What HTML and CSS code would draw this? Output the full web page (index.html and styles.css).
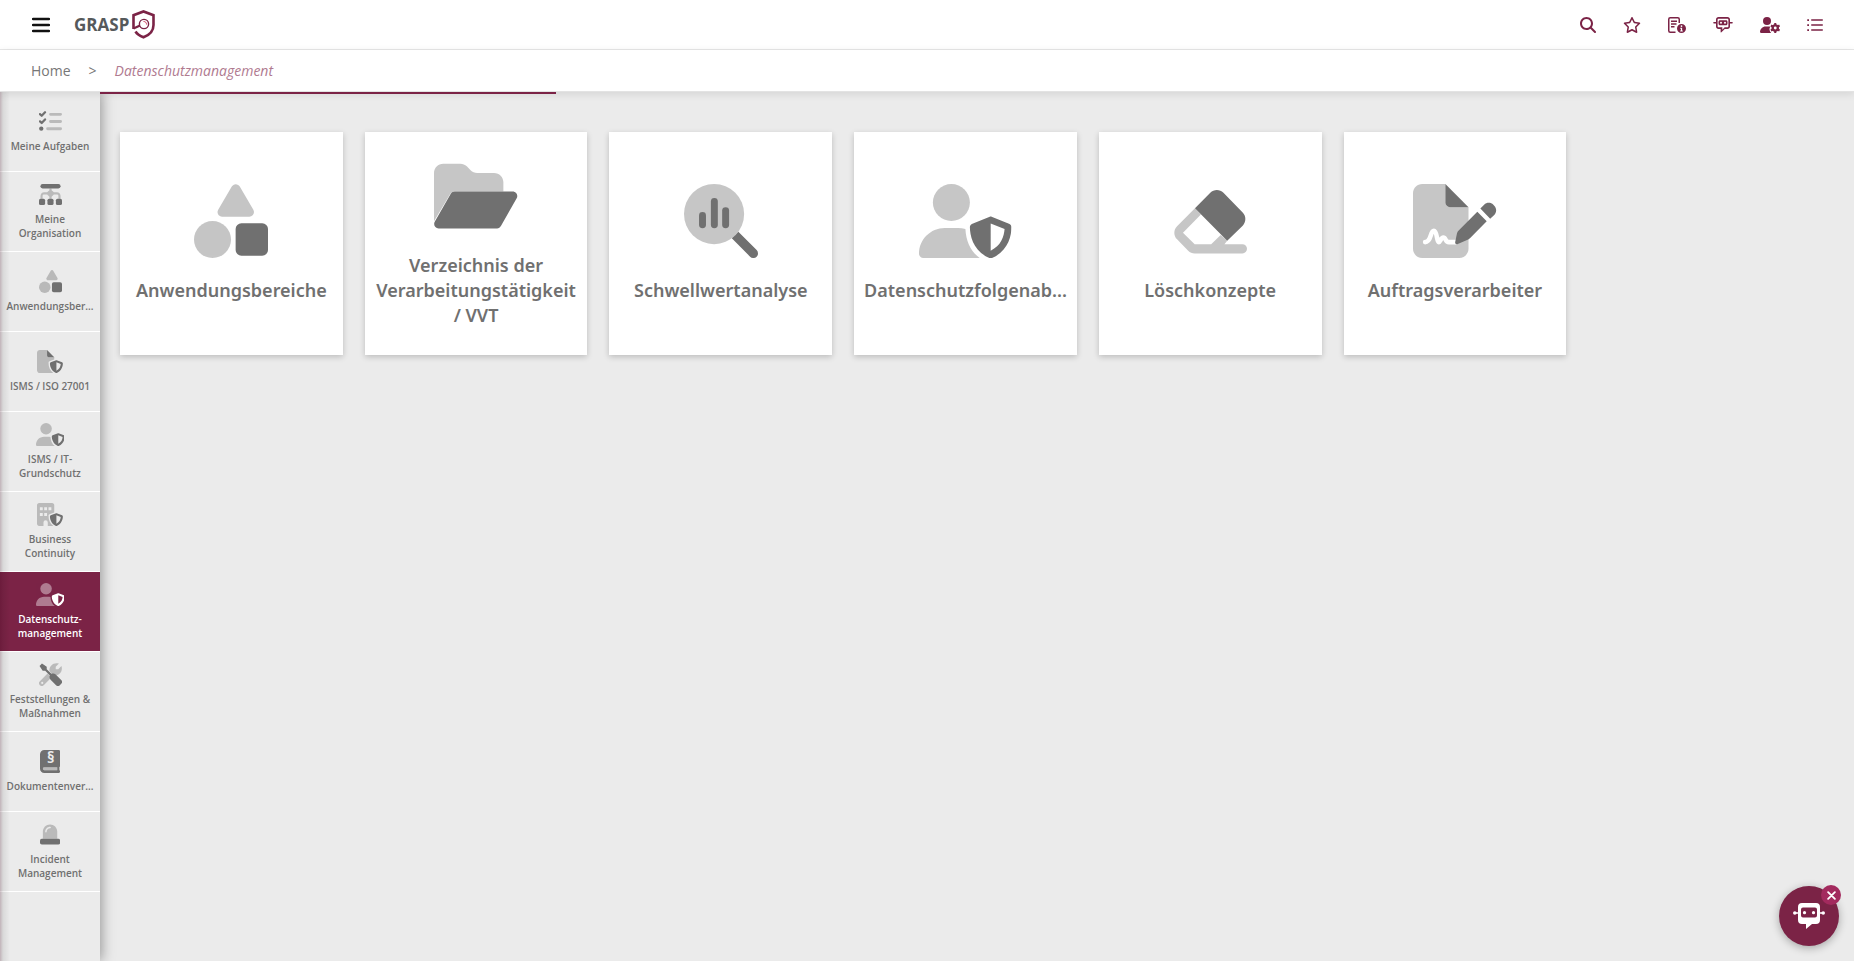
FILE: index.html
```html
<!DOCTYPE html>
<html lang="de">
<head>
    <meta charset="UTF-8">
    <meta name="viewport" content="width=device-width, initial-scale=1.0">
    <title>GRASP - Datenschutzmanagement</title>
    <link rel="stylesheet" href="styles.css">
</head>
<body>
    <!-- shared icon shapes -->
    <svg class="sprite" aria-hidden="true">
        <symbol id="shapes" viewBox="0 0 512 512">
            <g class="light">
                <path d="M289 34L195 194h188z" stroke="currentColor" stroke-width="64" stroke-linejoin="round"/>
                <circle cx="128" cy="384" r="128"/>
            </g>
            <rect x="288" y="272" width="224" height="224" rx="40"/>
        </symbol>
        <symbol id="user-shield" viewBox="0 0 640 512">
            <g class="light">
                <circle cx="224" cy="128" r="128"/>
                <path d="M178.3 304h91.4c18 0 35 2 51.300 7C326 400 360 470 420 512H29.700C13.300 512 0 498.700 0 482.300C0 383.800 79.800 304 178.300 304z"/>
            </g>
            <path fill-rule="evenodd" d="M489.600 226.700c4.100-1.600 8.700-1.600 12.800 0l120 48C631.500 278.300 640 286 640 297.600c0 63.300-25.900 168.800-134.800 214.200-5.900 2.500-12.600 2.500-18.500 0C377.800 466.400 352 360.900 352 297.600c0-11.600 8.500-19.300 17.600-22.900zM592 312L496 273.800V461c71-32 93-98 96-149z"/>
        </symbol>
        <symbol id="shield-small" viewBox="0 0 576 512">
            <path fill-rule="evenodd" d="M425.600 226.700c4.100-1.600 8.700-1.600 12.800 0l120 48C567.500 278.300 576 286 576 297.600c0 63.300-25.900 168.800-134.800 214.200-5.900 2.500-12.600 2.500-18.500 0C313.800 466.400 288 360.900 288 297.600c0-11.600 8.500-19.300 17.600-22.900zM528 312L432 273.800V461c71-32 93-98 96-149z"/>
        </symbol>
        <symbol id="robot" viewBox="0 0 640 512">
            <path fill-rule="evenodd" d="M176 0H464c44 0 80 36 80 80V304c0 44-36 80-80 80H376L270 490c-10 10-26 3-26-12V384H176c-44 0-80-36-80-80V80c0-44 36-80 80-80zM180 54c-18 0-32 14-32 32V298c0 18 14 32 32 32H298V406L374 330H460c18 0 32-14 32-32V86c0-18-14-32-32-32z"/>
            <path fill-rule="evenodd" d="M224 100H416c27 0 48 21 48 48v68c0 27-21 48-48 48H224c-27 0-48-21-48-48v-68c0-27 21-48 48-48zM256 150a32 32 0 1 0 0 64 32 32 0 1 0 0-64zM384 150a32 32 0 1 0 0 64 32 32 0 1 0 0-64z"/>
            <path d="M30 160H100V208H30a24 24 0 0 1 0-48zM540 160H610a24 24 0 0 1 0 48H540z"/>
        </symbol>
    </svg>

    <header class="topbar">
        <button class="menu-btn" aria-label="Menü">
            <svg viewBox="0 0 18 16"><path d="M1 2h16M1 8h16M1 14h16" fill="none" stroke="currentColor" stroke-width="2.400" stroke-linecap="round"/></svg>
        </button>
        <a class="logo" href="#">
            <span>GRASP</span>
            <svg viewBox="0 0 23 29" stroke="currentColor" aria-hidden="true">
                <path d="M1.500 19V5.200L11.500 1.500L21.500 5.200V15C21.500 21 17.500 25 11.500 27.300C8 26 5.200 24.300 3.500 21.500" stroke-width="2.600"/>
                <path d="M1.500 18.500L8 15.500" stroke-width="2.400"/>
                <circle cx="12" cy="14" r="4.600" stroke-width="1.400"/>
                <path d="M11.500 11.500c2 0 3 1 3 3" stroke="#d0405f" stroke-width="1"/>
            </svg>
        </a>
        <nav class="tools" aria-label="Werkzeuge">
            <button aria-label="Suche"><svg viewBox="0 0 512 512"><path d="M416 208c0 45.900-14.900 88.300-40 122.700L502.600 457.400c12.500 12.500 12.500 32.800 0 45.300s-32.800 12.500-45.300 0L330.700 376c-34.400 25.200-76.800 40-122.700 40C93.100 416 0 322.900 0 208S93.100 0 208 0S416 93.100 416 208zM208 352a144 144 0 1 0 0-288 144 144 0 1 0 0 288z"/></svg></button>
            <button aria-label="Favoriten"><svg viewBox="0 0 576 512"><path d="M287.900 0c9.200 0 17.600 5.200 21.600 13.500l68.600 141.300 153.200 22.600c9 1.300 16.500 7.600 19.300 16.300s.5 18.100-5.900 24.500L433.600 328.400l26.200 155.600c1.500 9-2.200 18.100-9.700 23.500s-17.300 6-25.300 1.700l-137-73.200L151 509.100c-8.100 4.300-17.900 3.700-25.300-1.700s-11.200-14.500-9.700-23.500l26.200-155.600L31.100 218.200c-6.500-6.400-8.700-15.900-5.900-24.500s10.300-14.900 19.300-16.300l153.200-22.600L266.300 13.500C270.400 5.200 278.700 0 287.900 0zm0 79L235.400 187.200c-3.500 7.100-10.200 12.100-18.100 13.300L99 217.900 184.900 303c5.500 5.500 8.100 13.300 6.800 21L171.400 443.700l105.200-56.200c7.100-3.800 15.600-3.800 22.600 0l105.200 56.200L384.200 324.100c-1.300-7.700 1.200-15.500 6.800-21l85.900-85.100L358.600 200.500c-7.800-1.200-14.600-6.100-18.100-13.300L287.900 79z"/></svg></button>
            <button aria-label="Protokoll"><svg viewBox="0 0 576 512">
                <path d="M240 488H72a48 48 0 0 1-48-48V72a48 48 0 0 1 48-48H312a48 48 0 0 1 48 48V190" fill="none" stroke="currentColor" stroke-width="48"/>
                <path d="M96 136H288M96 224H272M96 312H208" fill="none" stroke="currentColor" stroke-width="44"/>
                <path fill-rule="evenodd" d="M432 224a144 144 0 1 0 0 288 144 144 0 1 0 0-288zM432 262a28 28 0 1 1 0 56 28 28 0 1 1 0-56zM392 342h60v88h22v34h-84v-34h22v-54h-20z"/>
            </svg></button>
            <button aria-label="Assistent"><svg viewBox="0 0 640 512"><use href="#robot"/></svg></button>
            <button aria-label="Benutzer"><svg viewBox="0 0 640 512">
                <circle cx="224" cy="128" r="128"/>
                <path d="M178.300 304h91.400c20 0 40 3 58 9-40 60-30 140 30 199H29.700C13.300 512 0 498.700 0 482.300C0 383.800 79.800 304 178.300 304z"/>
                <circle cx="488" cy="352" r="82" fill="none" stroke="currentColor" stroke-width="76"/>
                <path d="M488 192V512M349 272L627 432M349 432L627 272" fill="none" stroke="currentColor" stroke-width="66"/>
                <circle cx="488" cy="352" r="46" fill="#fff"/>
            </svg></button>
            <button aria-label="Liste"><svg viewBox="0 0 512 512"><path d="M152 96H488M152 256H488M152 416H488" fill="none" stroke="currentColor" stroke-width="48" stroke-linecap="round"/><path d="M8 68h56v56H8zM8 228h56v56H8zM8 388h56v56H8z"/></svg></button>
        </nav>
    </header>

    <nav class="breadcrumb" aria-label="Brotkrumen">
        <a href="#">Home</a>
        <span class="divider">&gt;</span>
        <a class="current" href="#">Datenschutzmanagement</a>
    </nav>

    <div class="layout">
        <nav class="sidebar" aria-label="Module">
            <a class="side-item" href="#">
                <svg viewBox="0 0 512 512">
                    <path d="M22 92L60 128L134 50M22 252L60 288L134 210" fill="none" stroke="currentColor" stroke-width="50" stroke-linecap="round" stroke-linejoin="round"/>
                    <circle cx="50" cy="416" r="48"/>
                    <path class="light" d="M256 96H480M256 256H480M192 416H480" fill="none" stroke="currentColor" stroke-width="64" stroke-linecap="round"/>
                </svg>
                <span>Meine Aufgaben</span>
            </a>
            <a class="side-item" href="#">
                <svg viewBox="0 0 512 512">
                    <rect x="32" y="24" width="448" height="96" rx="48"/>
                    <path class="light" d="M232 120h48v40l50 48h70c45 0 80 35 80 80v62h-48v-62c0-18-14-32-32-32h-70l-50 50v44h-48v-44l-50-50h-70c-18 0-32 14-32 32v62H34v-62c0-45 35-80 80-80h68l50-48z"/>
                    <rect y="350" width="136" height="140" rx="36"/>
                    <rect x="188" y="350" width="136" height="140" rx="36"/>
                    <rect x="376" y="350" width="136" height="140" rx="36"/>
                </svg>
                <span>Meine Organisation</span>
            </a>
            <a class="side-item" href="#">
                <svg viewBox="0 0 512 512"><use href="#shapes"/></svg>
                <span>Anwendungsber...</span>
            </a>
            <a class="side-item" href="#">
                <svg viewBox="0 0 576 512">
                    <path class="light" d="M0 64C0 28.700 28.700 0 64 0H224V128c0 17.700 14.300 32 32 32H384v52L278 250c-14 6-22 16-22 32 0 100 40 180 104 225-12 4-26 5-40 5H64c-35.300 0-64-28.700-64-64z"/>
                    <path d="M224 0V128c0 17.700 14.300 32 32 32H384z"/>
                    <use href="#shield-small"/>
                </svg>
                <span>ISMS / ISO 27001</span>
            </a>
            <a class="side-item" href="#">
                <svg viewBox="0 0 640 512"><use href="#user-shield"/></svg>
                <span>ISMS / IT-Grundschutz</span>
            </a>
            <a class="side-item" href="#">
                <svg viewBox="0 0 576 512">
                    <path class="light" fill-rule="evenodd" d="M48 0H336c26.500 0 48 21.500 48 48V212L278 250c-14 6-22 16-22 32 0 100 40 180 104 225-7 4-16 5-24 5H240V432a48 48 0 0 0-96 0v80H48c-26.500 0-48-21.500-48-48V48C0 21.500 21.500 0 48 0zM64 96v64h64V96zM160 96v64h64V96zM256 96v64h64V96zM64 224v64h64V224zM160 224v64h64V224z"/>
                    <use href="#shield-small"/>
                </svg>
                <span>Business Continuity</span>
            </a>
            <a class="side-item active" href="#" aria-current="page">
                <svg viewBox="0 0 640 512"><use href="#user-shield"/></svg>
                <span>Datenschutz-management</span>
            </a>
            <a class="side-item" href="#">
                <svg viewBox="0 0 512 512">
                    <path class="light" fill-rule="evenodd" d="M20 404L190 236L276 322L110 492a62 62 0 0 1-90-88zM72 420a24 24 0 1 0 0 48 24 24 0 1 0 0-48zM232 180C220 90 290 0 400 4L444 12L372 84V140H428L500 68c30 90-20 190-120 208-30 4-50 0-70-8z"/>
                    <path d="M12 66L66 12L172 82V138L276 242C310 226 346 232 372 258L494 380a60 60 0 0 1 0 84l-30 30a60 60 0 0 1-84 0L258 372C232 346 226 310 242 276L138 172H82z"/>
                </svg>
                <span>Feststellungen &amp; Maßnahmen</span>
            </a>
            <a class="side-item" href="#">
                <svg viewBox="0 0 448 512">
                    <path fill-rule="evenodd" d="M96 0H416c18 0 32 14 32 32V352c0 12-6 22-16 28v70c10 4 16 14 16 26 0 20-14 36-32 36H96c-53 0-96-43-96-96V96C0 43 43 0 96 0zM96 384a32 32 0 0 0 0 64H384V384z"/>
                    <path class="light" d="M96 384a32 32 0 0 0 0 64H384V384z"/>
                    <text class="section-sign" x="236" y="286">§</text>
                </svg>
                <span>Dokumentenver...</span>
            </a>
            <a class="side-item" href="#">
                <svg viewBox="0 0 448 512">
                    <path class="light" fill-rule="evenodd" d="M64 352V192C64 104 136 32 224 32s160 72 160 160V352zM116 196a16 16 0 0 0 32 0c0-44 34-78 78-78a16 16 0 0 0 0-32c-62 0-110 48-110 110z"/>
                    <rect y="352" width="448" height="128" rx="40"/>
                </svg>
                <span>Incident Management</span>
            </a>
        </nav>

        <main class="content">
            <div class="progress"></div>
            <div class="tiles">
                <a class="tile" href="#">
                    <svg viewBox="0 0 512 512"><use href="#shapes"/></svg>
                    <span>Anwendungsbereiche</span>
                </a>
                <a class="tile" href="#">
                    <svg viewBox="0 0 576 512">
                        <path class="light" d="M0 430V96c0-35.300 28.700-64 64-64h117.500c17 0 33.300 6.700 45.300 18.700l26.500 26.600c12 12 28.300 18.700 45.300 18.700H416c35.300 0 64 28.700 64 64v64H144c-15 0-25 6-32 18z"/>
                        <path d="M144 224H544c25 0 40 26 28 48L464 462c-6 11-16 18-28 18H32C8 480-6 455 5 434L116 240c6-10 16-16 28-16z"/>
                    </svg>
                    <span>Verzeichnis der Verarbeitungstätigkeit / VVT</span>
                </a>
                <a class="tile" href="#">
                    <svg viewBox="0 0 512 512">
                        <circle class="light" cx="208" cy="208" r="208"/>
                        <rect x="104" y="194" width="48" height="112" rx="24"/>
                        <rect x="186" y="97" width="48" height="209" rx="24"/>
                        <rect x="264" y="160" width="48" height="146" rx="24"/>
                        <path d="M376 330.700L502.600 457.400a32 32 0 0 1-45.300 45.300L330.700 376A208 208 0 0 0 376 330.700z"/>
                    </svg>
                    <span>Schwellwertanalyse</span>
                </a>
                <a class="tile" href="#">
                    <svg viewBox="0 0 640 512"><use href="#user-shield"/></svg>
                    <span>Datenschutzfolgenab...</span>
                </a>
                <a class="tile" href="#">
                    <svg viewBox="0 0 512 512">
                        <path class="light" d="M152 168L28 292c-25 25-25 66 0 91L105 461c12 12 28 19 45 19H480a32 32 0 0 0 0-64H356L375 393L330 352L264 416H150L69 337L193 211z"/>
                        <path d="M152 168L258 60c25-25 66-25 91 0L482 197c25 25 25 66 0 91L375 393z"/>
                    </svg>
                    <span>Löschkonzepte</span>
                </a>
                <a class="tile" href="#">
                    <svg viewBox="0 0 576 512">
                        <path class="light" d="M0 64C0 28.700 28.700 0 64 0H224V128c0 17.700 14.300 32 32 32H384V448c0 35.300-28.700 64-64 64H64c-35.300 0-64-28.700-64-64z"/>
                        <path d="M224 0V128c0 17.700 14.300 32 32 32H384z"/>
                        <path d="M84 402c44 0 34-78 60-78 24 0 20 78 34 78 12 0 14-32 32-32 18 0 12 32 38 32h50" fill="none" stroke="#fff" stroke-width="32" stroke-linecap="round" stroke-linejoin="round"/>
                        <path d="M445 192L510 258L394 376c-6 6-12 10-20 12L306 416c-10 2-16-4-14-14L304 342c2-8 6-14 12-20zM466 170L492 144c18-18 46-18 64 0l6 6c18 18 18 46 0 64L534 241z"/>
                    </svg>
                    <span>Auftragsverarbeiter</span>
                </a>
            </div>
        </main>
    </div>

    <div class="chatbot">
        <button class="chat-btn" aria-label="Chatbot öffnen">
            <svg viewBox="0 0 32 26">
                <path fill-rule="evenodd" d="M9 0h14a4 4 0 0 1 4 4v13a4 4 0 0 1-4 4h-4l-6 5v-5H9a4 4 0 0 1-4-4V4a4 4 0 0 1 4-4zM10 4.500a2 2 0 0 0-2 2v6a2 2 0 0 0 2 2h12a2 2 0 0 0 2-2v-6a2 2 0 0 0-2-2z"/>
                <circle cx="11.500" cy="9.700" r="1.600"/>
                <circle cx="20.500" cy="9.700" r="1.600"/>
                <path d="M1 9.200h5v1.500H1zM26 9.200h5v1.500h-5z"/>
                <circle cx="1.800" cy="10" r="1.800"/>
                <circle cx="30.200" cy="10" r="1.800"/>
            </svg>
        </button>
        <button class="chat-close" aria-label="Chatbot schließen">
            <svg viewBox="0 0 8 8"><path d="M1 1l6 6M7 1L1 7" fill="none" stroke="currentColor" stroke-width="1.600" stroke-linecap="round"/></svg>
        </button>
    </div>
</body>
</html>
```

FILE: styles.css
```css
* {
    box-sizing: border-box;
}

body {
    margin: 0;
    min-height: 100vh;
    display: flex;
    flex-direction: column;
    background: #ebebeb;
    font-family: "Open Sans", "Noto Sans", sans-serif;
    color: #707070;
    overflow-x: hidden;
}

a {
    color: inherit;
    text-decoration: none;
}

button {
    padding: 0;
    border: none;
    background: none;
    color: inherit;
    cursor: pointer;
}

svg {
    display: block;
    fill: currentColor;
}

.sprite {
    position: absolute;
    width: 0;
    height: 0;
}

.light {
    opacity: 0.4;
}

.section-sign {
    fill: #ebebeb;
    font-size: 340px;
    font-weight: 700;
    text-anchor: middle;
}

.topbar {
    height: 50px;
    display: flex;
    align-items: center;
    padding: 0 31px 0 32px;
    background: #fff;
    border-bottom: 1px solid #e8e8e8;
}

.menu-btn {
    color: #111;
}

.menu-btn svg {
    width: 18px;
    height: 16px;
}

.logo {
    display: flex;
    align-items: center;
    gap: 3px;
    margin-left: 24px;
    color: #7b2346;
}

.logo span {
    font-size: 17px;
    font-weight: 700;
    color: #55595b;
}

.logo svg {
    width: 23px;
    height: 29px;
    fill: none;
}

.tools {
    display: flex;
    gap: 27px;
    margin-left: auto;
    color: #7b2346;
}

.tools svg {
    width: auto;
    height: 16px;
}

.breadcrumb {
    position: relative;
    z-index: 2;
    height: 42px;
    display: flex;
    align-items: center;
    gap: 18px;
    padding: 0 31px;
    background: #fff;
    border-bottom: 1px solid #e3e3e3;
    box-shadow: 0 2px 8px rgba(0, 0, 0, 0.1);
    font-size: 14px;
    color: #777;
}

.breadcrumb .current {
    font-style: italic;
    color: #b07a90;
}

.layout {
    flex: 1;
    display: flex;
}

.sidebar {
    position: relative;
    z-index: 1;
    flex: none;
    width: 100px;
    background: #ebebeb;
    box-shadow: 2px 0 12px rgba(0, 0, 0, 0.35);
}

/* shadow along the window edge */
.sidebar::after {
    content: "";
    position: absolute;
    top: 0;
    bottom: 0;
    left: 0;
    width: 10px;
    background: linear-gradient(to right, rgba(60, 0, 25, 0.24), rgba(0, 0, 0, 0.08) 30%, rgba(0, 0, 0, 0));
    pointer-events: none;
}

.side-item {
    height: 80px;
    display: flex;
    flex-direction: column;
    align-items: center;
    justify-content: center;
    gap: 6px;
    padding: 0 5px;
    border-bottom: 1px solid #fff;
    font-size: 10px;
    font-weight: 600;
    line-height: 14px;
    text-align: center;
}

.side-item svg {
    width: auto;
    height: 23px;
}

.side-item span,
.tile span {
    max-width: 100%;
}

.side-item.active {
    background: #7b2346;
    color: #fff;
}

.content {
    flex: 1;
    min-width: 0;
}

.progress {
    position: relative;
    z-index: 3;
    width: 26%;
    height: 2px;
    background: #7b2346;
}

.tiles {
    display: grid;
    grid-template-columns: repeat(auto-fill, minmax(200px, 1fr));
    gap: 22px;
    padding: 38px 43px 38px 20px;
}

.tile {
    aspect-ratio: 1;
    min-width: 0;
    display: flex;
    flex-direction: column;
    align-items: center;
    justify-content: center;
    gap: 20px;
    padding: 0 8px;
    background: #fff;
    box-shadow: 0 2px 6px rgba(0, 0, 0, 0.2);
    font-family: "Noto Sans", "Open Sans", sans-serif;
    font-size: 18px;
    font-weight: 600;
    line-height: 25px;
    text-align: center;
}

.tile svg {
    width: auto;
    height: 74px;
}

.chatbot {
    position: fixed;
    right: 15px;
    bottom: 15px;
    z-index: 4;
    color: #fff;
}

.chat-btn {
    display: flex;
    align-items: center;
    justify-content: center;
    width: 60px;
    height: 60px;
    border-radius: 50%;
    background: #7b2346;
    box-shadow: 0 2px 8px rgba(0, 0, 0, 0.3);
}

.chat-btn svg {
    width: 32px;
    height: 26px;
}

.chat-close {
    position: absolute;
    top: -1px;
    right: -2px;
    display: flex;
    align-items: center;
    justify-content: center;
    width: 20px;
    height: 20px;
    border-radius: 50%;
    background: #a32a5e;
}

.chat-close svg {
    width: 9px;
    height: 9px;
}
```
